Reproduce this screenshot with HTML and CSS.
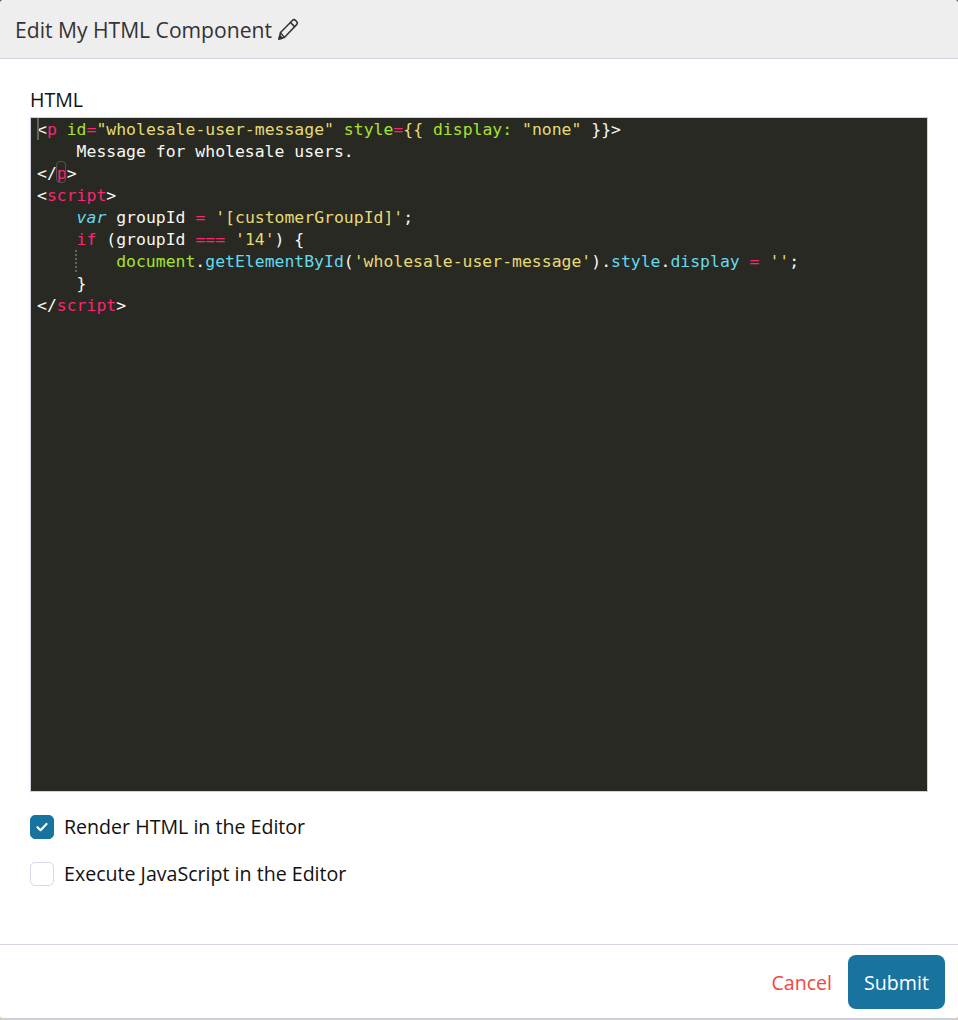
FILE: index.html
```html
<!DOCTYPE html>
<html lang="en">
<head>
<meta charset="utf-8">
<title>Edit My HTML Component</title>
<link rel="stylesheet" href="styles.css">
</head>
<body>
<div class="modal">
  <header class="modal-head">
    <span>Edit My HTML Component</span>
    <svg class="pencil" width="24" height="24" viewBox="0 0 24 24" fill="none" stroke="currentColor" stroke-width="1.5" stroke-linejoin="round" stroke-linecap="round"><path d="M3 22l1.5-6.4L16.4 3.4a2.2 2.2 0 0 1 3.1 0l1.1 1.1a2.2 2.2 0 0 1 0 3.1L8.4 20.4z"/><path d="M14.4 5.4l4.2 4.2M4.5 15.6l3.9 4.8"/><path d="M3 22l.8-3.4 2.6 2.6z" fill="currentColor"/></svg>
  </header>
  <main class="modal-body">
    <label class="field-label">HTML</label>
    <div class="editor">
      <span class="cursor"></span>
      <span class="bracket-mark"></span>
      <span class="indent-guide"></span>
<pre class="code"><span class="w">&lt;</span><span class="r">p</span> <span class="g">id</span><span class="r">=</span><span class="y">"wholesale-user-message"</span> <span class="g">style</span><span class="r">=</span><span class="y">{{</span> <span class="g">display:</span> <span class="y">"none"</span> <span class="w">}}&gt;</span>
    <span class="w">Message for wholesale users.</span>
<span class="w">&lt;/</span><span class="r">p</span><span class="w">&gt;</span>
<span class="w">&lt;</span><span class="r">script</span><span class="w">&gt;</span>
    <span class="b i">var</span> <span class="w">groupId</span> <span class="r">=</span> <span class="y">'[customerGroupId]'</span><span class="w">;</span>
    <span class="r">if</span> <span class="w">(groupId</span> <span class="r">===</span> <span class="y">'14'</span><span class="w">) {</span>
        <span class="g">document</span><span class="w">.</span><span class="b">getElementById</span><span class="w">(</span><span class="y">'wholesale-user-message'</span><span class="w">).</span><span class="b">style</span><span class="w">.</span><span class="b">display</span> <span class="r">=</span> <span class="y">''</span><span class="w">;</span>
    <span class="w">}</span>
<span class="w">&lt;/</span><span class="r">script</span><span class="w">&gt;</span></pre>
    </div>
    <div class="checks">
      <div class="check-row">
        <span class="box box-on"><svg width="14" height="14" viewBox="0 0 14 14" fill="none" stroke="#fff" stroke-width="2.2" stroke-linecap="round" stroke-linejoin="round"><path d="M2.5 7.2l3 3L11.5 4"/></svg></span>
        <span>Render HTML in the Editor</span>
      </div>
      <div class="check-row">
        <span class="box"></span>
        <span>Execute JavaScript in the Editor</span>
      </div>
    </div>
  </main>
  <footer class="modal-foot">
    <a class="cancel">Cancel</a>
    <button class="submit">Submit</button>
  </footer>
</div>
</body>
</html>
```

FILE: styles.css
```css
* { box-sizing: border-box; }
html, body { margin: 0; height: 100%; }
body { font-family: "Open Sans", "Noto Sans", sans-serif; color: #111; overflow: hidden; background: linear-gradient(#4d6a85 50%, #d8cdbd 50%); }
.modal {
  width: 958px; height: 1020px; display: flex; flex-direction: column;
  background: #fff; border-radius: 4px; border-bottom: 2px solid #cfcfd6;
}
.modal-head {
  height: 59px; flex: none; display: flex; align-items: center; gap: 4px;
  padding: 0 15px; background: #eeeeef; border-bottom: 1px solid #d3d3e6;
  border-radius: 4px 4px 0 0; font-size: 21.1px; color: #333;
}
.pencil { color: #333; }
.modal-body { flex: 1; padding: 29px 30px 0; display: flex; flex-direction: column; }
.field-label { font-size: 19.6px; line-height: 24px; height: 29px; color: #111; }
.editor {
  position: relative; height: 675px; flex: none; background: #282923;
  border: 1px solid #d0d0e4; overflow: hidden;
}
.code {
  margin: 0; padding: 1px 0 0 6px; font-family: "DejaVu Sans Mono", monospace;
  font-size: 16.45px; line-height: 22px; color: #f8f8f2; white-space: pre;
}
.w { color: #f8f8f2; }
.r { color: #f92672; }
.g { color: #a6e22e; }
.y { color: #e6db74; }
.b { color: #66d9ef; }
.i { font-style: italic; }
.cursor { position: absolute; left: 6px; top: 0; width: 2px; height: 22px; background: #63635f; }
.bracket-mark { position: absolute; left: 25px; top: 43px; width: 10px; height: 22px; border: 1px solid #55554f; border-radius: 4px; }
.indent-guide { position: absolute; left: 44px; top: 132px; height: 22px; border-left: 2px dotted #66665f; }
.checks { display: flex; flex-direction: column; gap: 23px; margin-top: 23px; }
.check-row { display: flex; align-items: center; gap: 10px; font-size: 19.6px; line-height: 24px; color: #111; }
.box { width: 24px; height: 24px; border: 1px solid #d8d8ea; border-radius: 5px; background: #fff; display: flex; align-items: center; justify-content: center; }
.box-on { background: #18749f; border-color: #18749f; }
.modal-foot {
  height: 74px; flex: none; display: flex; align-items: center; justify-content: flex-end; gap: 16px;
  padding: 1px 13px 0 0; border-top: 1px solid #d3d3e6;
}
.cancel { color: #f0483e; font-size: 19.6px; }
.submit {
  width: 97px; height: 54px; border: 0; border-radius: 8px; background: #18749f; color: #fff;
  font-family: "Open Sans", sans-serif; font-size: 19.6px;
}
```
